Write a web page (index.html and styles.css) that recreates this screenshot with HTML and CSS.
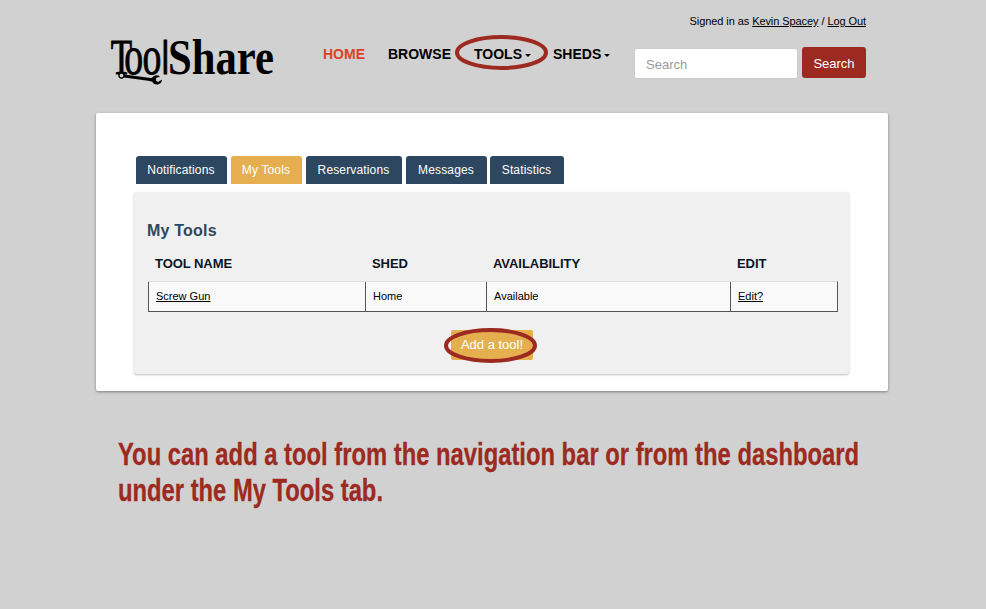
FILE: index.html
```html
<!DOCTYPE html>
<html lang="en">
<head>
<meta charset="utf-8">
<title>ToolShare</title>
<link rel="stylesheet" href="styles.css">
</head>
<body>
<div class="page">
  <header class="header">
    <svg class="logo" width="180" height="78" viewBox="0 -15 180 78" role="img" aria-label="ToolShare">
      <text class="logo-thin" transform="scale(.7 1)" y="38.5"><tspan x="1">T</tspan><tspan class="logo-o" x="20.3 46.3">oo</tspan><tspan class="logo-l" x="74">l</tspan></text>
      <text class="logo-bold" x="58" y="38.5" textLength="106" lengthAdjust="spacingAndGlyphs">Share</text>
      <path d="M12.5 40.8L42 44.8" stroke="#000" stroke-width="3"/>
      <circle cx="11.5" cy="40.5" r="2.5" fill="#d1d1d1" stroke="#000" stroke-width="1.3"/>
      <path d="M39 43.2L42 42.8Q44 39.5 48.5 40.5L50 42L46.5 42.4L45.8 45.4L48 47L52 44.5Q52 48.5 47.8 49.5Q43.5 50 42.2 46.5L39 46Z"/>
    </svg>
    <nav class="nav">
      <a class="home">HOME</a>
      <a class="browse">BROWSE</a>
      <a class="tools ringed">TOOLS<i class="caret"></i>
        <svg class="ring" width="94" height="36"><ellipse cx="46.5" cy="18.5" rx="44.5" ry="15.5"/></svg></a>
      <a class="sheds">SHEDS<i class="caret"></i></a>
    </nav>
    <div class="account">
      <p class="signed">Signed in as <u>Kevin Spacey</u> / <u>Log Out</u></p>
      <form class="search">
        <input type="text" placeholder="Search">
        <button type="button">Search</button>
      </form>
    </div>
  </header>
  <main class="card">
    <div class="tabs">
      <a class="t1">Notifications</a>
      <a class="t2 active">My Tools</a>
      <a class="t3">Reservations</a>
      <a class="t4">Messages</a>
      <a class="t5">Statistics</a>
    </div>
    <section class="panel">
      <h2>My Tools</h2>
      <div class="row head"><b>TOOL NAME</b><b>SHED</b><b>AVAILABILITY</b><b>EDIT</b></div>
      <div class="row data"><span><u>Screw Gun</u></span><span>Home</span><span>Available</span><span><u>Edit?</u></span></div>
      <a class="add ringed">Add a tool!
        <svg class="ring" width="94" height="36"><ellipse cx="46.5" cy="18.5" rx="44.5" ry="15.5"/></svg></a>
    </section>
  </main>
  <svg class="caption" width="776" height="90">
    <text x="6" y="37" textLength="741" lengthAdjust="spacingAndGlyphs">You can add a tool from the navigation bar or from the dashboard</text>
    <text x="6" y="73" textLength="265" lengthAdjust="spacingAndGlyphs">under the My Tools tab.</text>
  </svg>
</div>
</body>
</html>
```
FILE: styles.css
```css
* { box-sizing: border-box; }
body { margin: 0; background: #d1d1d1; font: 11px/14px "Liberation Sans", Arial, sans-serif; color: #000; }
.page { width: 792px; height: 609px; margin-left: 96px; }
.header { display: flex; height: 113px; }
.logo { margin: 20px -10px 0 14px; flex: none; }
.logo-thin { font: 50px "Liberation Serif", serif; stroke: #000; stroke-width: .9px; }
.logo-o { font-size: 54px; }
.logo-l { font: 46px "Liberation Sans", Arial, sans-serif; }
.logo-bold { font: bold 50px "Liberation Serif", serif; }
.nav { display: flex; width: 311px; margin: 46px 0 0 43px; height: 17px; flex: none; font: bold 14px/17px "Liberation Sans", Arial, sans-serif; white-space: nowrap; }
.home { width: 65px; color: #dd4124; }
.browse { width: 86px; }
.tools { width: 79px; }
.caret { display: inline-block; margin-left: 3px; vertical-align: 2px; border: 3px solid transparent; border-top-color: #000; border-bottom: 0; }
.ringed { position: relative; }
.ring { position: absolute; fill: none; stroke: #9c2a20; stroke-width: 4px; }
.tools .ring { left: -19px; top: -12px; }
.account { width: 232px; flex: none; }
.signed { margin: 14px 0 19px; text-align: right; white-space: nowrap; letter-spacing: -.08px; }
.search { display: flex; align-items: flex-start; gap: 4px; }
.search input { width: 164px; height: 31px; margin-top: 1px; border: 1px solid #ccc; border-radius: 3px; padding: 2px 11px 0; font: 13px "Liberation Sans", Arial, sans-serif; }
.search input::placeholder { color: #999; }
.search button { width: 64px; height: 31px; border: 0; border-radius: 3px; padding: 2px 0 0; background: #9c2a20; color: #fff; font: 13px "Liberation Sans", Arial, sans-serif; }
.card { height: 278px; padding: 43px 38px 0 37px; background: #fff; border-radius: 2px; box-shadow: 0 1px 3px rgba(0,0,0,.4); }
.tabs { display: flex; height: 28px; margin-left: 3px; gap: 4px; }
.tabs a { padding-right: 1px; background: #2e4761; color: #fff; border-radius: 3px 3px 0 0; text-align: center; font-size: 12px; line-height: 28px; letter-spacing: .15px; }
.t1 { width: 91px; } .t2 { width: 71px; } .t3 { width: 96px; } .t4 { width: 81px; } .t5 { width: 74px; }
.tabs .active { background: #e5af50; }
.tabs .t5 { margin-left: -1px; }
.panel { height: 182px; margin: 8px 1px 0 1px; padding: 30px 11px 0 14px; background: #f0f0f0; border-radius: 2px; box-shadow: 0 1px 2px rgba(0,0,0,.25); }
h2 { margin: 0 0 0 -1px; font-size: 16px; line-height: 18px; letter-spacing: .2px; color: #2e4761; }
.row { display: grid; grid-template-columns: 217px 121px 244px 1fr; margin-left: 1px; }
.head { height: 41px; padding-top: 17px; font-size: 13px; color: #0a1528; letter-spacing: -.05px; }
.head b { padding-left: 7px; }
.row { margin-left: 0; }
.data { height: 31px; background: #f9f9f9; border-top: 1px solid #ddd; border-bottom: 1px solid #555; border-right: 1px solid #555; }
.data span { border-left: 1px solid #555; padding: 7px 0 0 7px; }
.add { display: block; width: 82px; height: 30px; margin: 18px 0 0 303px; border-radius: 2px; background: #e5af50; color: #fff; font-size: 13px; line-height: 29px; text-align: center; }
.add .ring { left: -7px; top: -3px; }
.caption { display: block; margin: 37px 0 0 16px; fill: #9c2a20; stroke: #9c2a20; stroke-width: .3px; font: bold 31.5px "Liberation Sans Narrow", "Liberation Sans", Arial, sans-serif; }
```
